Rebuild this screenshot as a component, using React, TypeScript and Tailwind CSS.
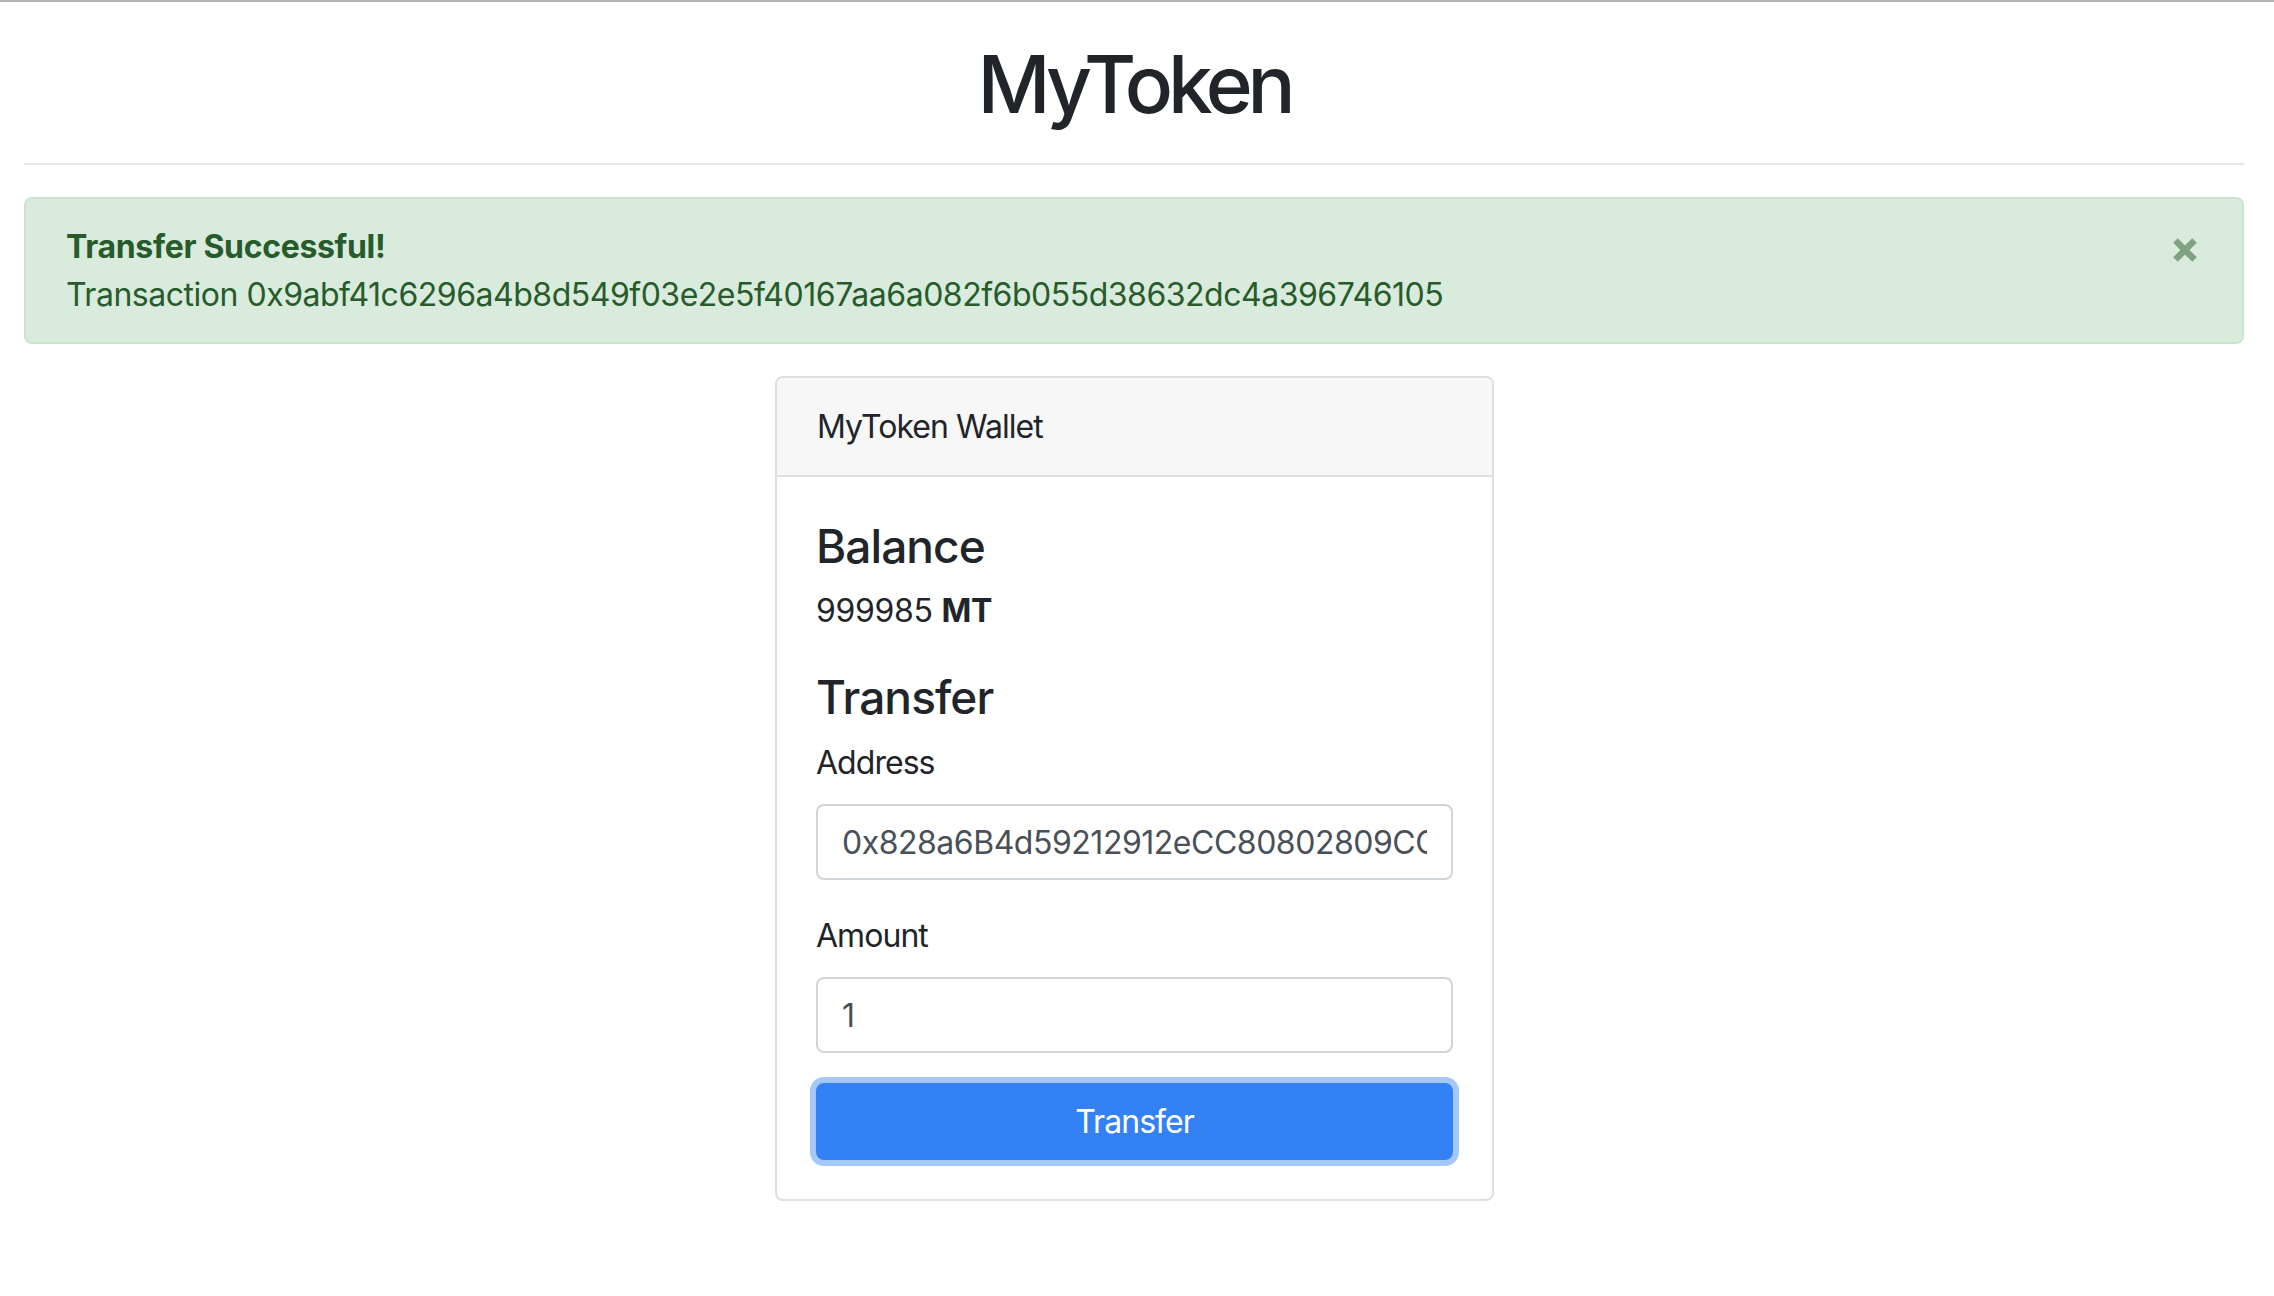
import React from "react";

export default function App() {
  return (
    <div className="min-h-[1296px] bg-white font-['Inter',sans-serif] text-[#212529]">
      <div className="h-[2px] w-full bg-[#b4b4b4]" />
      <div className="pl-[24px] pr-[30px] pt-[34px]">
        <h1 className="text-center text-[80px] font-medium leading-[96px] tracking-[-0.065em]">MyToken</h1>
        <div className="mt-[31px] h-[2px] bg-[#e6e6e6]" />
        <div className="mt-[32px] flex items-start rounded-[8px] border-2 border-[#c8e4cd] bg-[#d9ebdc] px-[40px] pb-[23px] pt-[24px] text-[32px] leading-[48px] text-[#275b2b]">
          <div className="flex-1">
            <div className="font-bold tracking-[-0.01em]">Transfer Successful!</div>
            <div className="tracking-[-0.015em]">Transaction 0x9abf41c6296a4b8d549f03e2e5f40167aa6a082f6b055d38632dc4a396746105</div>
          </div>
          <svg width="24" height="24" viewBox="0 0 24 24" className="mr-[5px] mt-[15px]">
            <path d="M2.5 2.5 L21.5 21.5 M21.5 2.5 L2.5 21.5" stroke="#7fa283" strokeWidth="6.5" />
          </svg>
        </div>
        <div className="mt-[32px] flex">
          <div className="ml-[751px] w-[719px] overflow-hidden rounded-[8px] border-2 border-[#dfdfdf]">
            <div className="border-b-2 border-[#dfdfdf] bg-[#f7f7f7] px-[40px] pb-[24px] pt-[25px] text-[32px] leading-[48px] tracking-[-0.03em]">MyToken Wallet</div>
            <div className="px-[39px] pb-[39px] pt-[36px]">
              <h3 className="text-[46px] font-medium leading-[67px] tracking-[-0.02em]">Balance</h3>
              <p className="mt-[7px] text-[32px] leading-[48px] tracking-[-0.01em]">
                999985 <span className="font-bold">MT</span>
              </p>
              <h3 className="mt-[29px] text-[46px] font-medium leading-[67px] tracking-[-0.02em]">Transfer</h3>
              <label className="mt-[8px] block text-[32px] leading-[48px] tracking-[-0.03em]">Address</label>
              <input
                readOnly
                value="0x828a6B4d59212912eCC80802809CCa8C6A6aFf61"
                className="mt-[17px] block h-[76px] w-full rounded-[8px] border-2 border-[#d0d5da] bg-white px-[24px] text-[32px] tracking-[-0.015em] text-[#495057] outline-none"
              />
              <label className="mt-[32px] block text-[32px] leading-[48px] tracking-[-0.03em]">Amount</label>
              <input
                readOnly
                value="1"
                className="mt-[17px] block h-[76px] w-full rounded-[8px] border-2 border-[#d0d5da] bg-white px-[24px] text-[32px] text-[#495057] outline-none"
              />
              <button className="mt-[30px] block h-[77px] w-full rounded-[8px] border-2 border-[#3381f4] bg-[#3381f4] text-[32px] tracking-[-0.03em] text-white shadow-[0_0_0_6px_#a3c8f9]">
                Transfer
              </button>
            </div>
          </div>
        </div>
      </div>
    </div>
  );
}
